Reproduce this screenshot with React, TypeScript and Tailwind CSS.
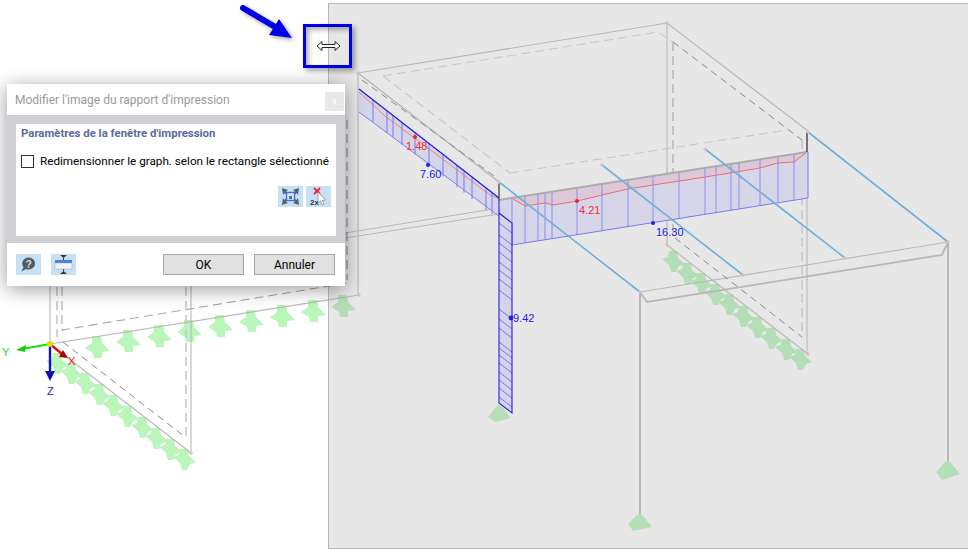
const GREEN_WHITE = "#baf5ba";
const GREEN_PANEL = "#b4dfb6";
const spade = "-5,-12 4,-12 5,-5 13,3 5,4 5,10 -3,10 -4,5 -12,0 -5,-5";
const spadeSide = "-4,-11 4,-11 5,-4 12,2 6,4 3,10 -2,10 -4,3 -11,-3 -5,-5";

const row1 = [[97, 348], [128, 342], [159, 337], [189, 332], [220, 327], [251, 322], [282, 317], [313, 312], [343, 307]];
const row2 = [[57, 364], [71, 374], [85, 384], [99, 395], [113, 406], [127, 417], [142, 428], [156, 439], [170, 450], [184, 460]];
const row3 = [[673, 262], [687, 274], [701, 284], [715, 295], [729, 305], [743, 317], [757, 328], [771, 339], [786, 350], [800, 360]];

const beamHatch = [512, 525, 538, 545, 552, 577, 602, 628, 653, 679, 705, 716, 731, 739, 760, 778, 794];
const columnHatch = [223, 235, 243, 252, 262, 270, 279, 290, 309, 319, 328, 342, 348, 355, 363, 372, 380, 388, 397];
const sideHatch = [373, 387, 393, 402, 415, 429, 443, 457, 464, 472, 486, 492];

const nodes = [[358, 73], [667, 23], [808, 132], [499, 182], [667, 245], [808, 354], [359, 295], [191, 453], [640, 292], [948, 242], [743, 275], [845, 258], [602, 165], [705, 149]];

function Model() {
  return (
    <svg className="absolute left-0 top-0" width="968" height="550" viewBox="0 0 968 550" fill="none">
      {/* supports */}
      {row1.map(([x, y]) => (
        <polygon key={`${x}-${y}`} points={spade} transform={`translate(${x} ${y})`} fill={x > 328 ? GREEN_PANEL : GREEN_WHITE} />
      ))}
      {row2.map(([x, y]) => (
        <polygon key={`${x}-${y}`} points={spadeSide} transform={`translate(${x} ${y})`} fill={GREEN_WHITE} />
      ))}
      {row3.map(([x, y]) => (
        <polygon key={`${x}-${y}`} points={spadeSide} transform={`translate(${x} ${y})`} fill={GREEN_PANEL} />
      ))}
      <polygon points="488,417 495,408 499,404 503,408 511,418 495,422" fill={GREEN_PANEL} />
      <polygon points="628,524 636,516 640,513 644,517 652,527 633,531" fill={GREEN_PANEL} />
      <polygon points="936,472 944,463 948,460 952,464 960,474 942,480" fill={GREEN_PANEL} />

      {/* frame lines */}
      <g stroke="#b8b8b8" strokeWidth="1.1">
        <path d="M358 73 L667 23 L808 131" />
        <path d="M358 73 L499 182" strokeWidth="1.5" />
        <path d="M358 73 V295" />
        <path d="M50 344 L359 295" />
        <path d="M50 344 L191 453" />
        <path d="M50 286 V344" />
        <path d="M191 286 V453" />
        <path d="M667 23 V245" />
        <path d="M667 245 L808 354" />
        <path d="M807 132 V354" />
        <path d="M345 238 L499 214" />
        <path d="M345 233 L499 208" />
        <path d="M640 292 L948 242" />
        <path d="M640 292 L647 302 L942 255 L948 242" strokeWidth="1.8" />
        <path d="M640 292 V514" strokeWidth="2" />
        <path d="M948 242 V461" strokeWidth="2" />
      </g>
      <g stroke="#c8c8c8" strokeWidth="1.1" strokeDasharray="9 5">
        <path d="M383 76 L658 32 L673 42" />
        <path d="M510 173 L787 130" />
        <path d="M383 76 L510 173" />
        <path d="M62 287 V330 L347 283" stroke="#a8a8a8" />
        <path d="M802 140 V333" strokeWidth="1.6" />
        <path d="M673 42 V238" strokeWidth="1.4" stroke="#b4b4b4" />
        <path d="M186 287 V437" strokeWidth="1.6" />
        <path d="M57 287 V337" strokeWidth="1.6" />
        <path d="M347 120 V280" stroke="#8a8a8a" />
      </g>
      <g stroke="#8a8a8a" strokeWidth="1" strokeDasharray="7 5">
        <path d="M362 80 L497 178" />
        <path d="M673 42 L802 140" />
        <path d="M675 238 L802 337" />
        <path d="M63 342 L185 437" />
      </g>

      {/* side beam diagram */}
      <polygon points="359,89 499,198 499,216 359,112" fill="#d5d5e8" />
      <path d="M359 92 L385 116 L440 157 L490 195 L499 199" stroke="#f08080" strokeWidth="1" />
      {sideHatch.map((x) => {
        const top = 89 + ((x - 359) * 109) / 140;
        return <path key={x} d={`M${x} ${top} V${top + 22}`} stroke="#7878f0" strokeWidth="1" />;
      })}
      <path d="M359 89 L499 198" stroke="#2020e0" strokeWidth="1.3" />
      <path d="M359 112 L499 216" stroke="#8080f0" strokeWidth="1" />

      {/* main beam diagram */}
      <polygon points="499,200 807,152 808,198 512,245 512,223 499,213" fill="#d6d6e8" />
      <polygon points="513,199 525,206 545,203 553,205 577,201 602,195 628,189 653,185 680,181 705,177 730,173 760,168 778,163 794,162 807,152 499,200" fill="#dcc8d6" />
      <path d="M513 199 L525 206 L545 203 L553 205 L577 201 L602 195 L628 189 L653 185 L680 181 L705 177 L730 173 L760 168 L778 163 L794 162 L807 152" stroke="#f06a6a" strokeWidth="1" />
      {beamHatch.map((x) => (
        <path key={x} d={`M${x} ${200 - ((x - 499) * 48) / 308} V${245 - ((x - 512) * 47) / 296}`} stroke="#8c8cf0" strokeWidth="1" />
      ))}
      <path d="M512 245 L808 198 V152" stroke="#7a7af0" strokeWidth="1" />
      <path d="M499 200 L807 152" stroke="#acacac" strokeWidth="2" />
      <path d="M499 182 V200 M807 132 V152" stroke="#3a3a3a" strokeWidth="1.2" />

      {/* column diagram */}
      <polygon points="499,200 512,223 512,413 499,403" fill="#d4d4e8" />
      {columnHatch.map((y) => (
        <path key={y} d={`M499 ${y} L512 ${y + 10}`} stroke="#6060ee" strokeWidth="0.8" />
      ))}
      <path d="M499 200 V403 L512 413 V223 L499 213" stroke="#2020e8" strokeWidth="1.1" />

      {/* purlins */}
      <g stroke="#6fb1d9" strokeWidth="1.6">
        <path d="M499 182 L640 292" />
        <path d="M602 165 L743 275" />
        <path d="M705 149 L845 258" />
        <path d="M808 132 L948 242" />
      </g>

      {nodes.map(([x, y]) => (
        <circle key={`${x}-${y}`} cx={x} cy={y} r="1.7" fill="#e6b9bf" />
      ))}

      {/* extreme values */}
      <g fontFamily="'Liberation Sans', sans-serif" fontSize="11">
        <circle cx="415" cy="137" r="2" fill="#f02020" />
        <text x="406" y="150" fill="#f03030">1.48</text>
        <circle cx="428" cy="165" r="2" fill="#2020e0" />
        <text x="420" y="178" fill="#2020e8">7.60</text>
        <circle cx="577" cy="201" r="2" fill="#f02020" />
        <text x="579" y="214" fill="#f03030">4.21</text>
        <circle cx="653" cy="223" r="2" fill="#2020e0" />
        <text x="656" y="236" fill="#2020e8">16.30</text>
        <circle cx="511" cy="318" r="2.4" fill="#2020e0" />
        <text x="513" y="322" fill="#2020e8">9.42</text>
      </g>

      {/* axes */}
      <path d="M50 344 L22 349" stroke="#14e014" strokeWidth="2" />
      <polygon points="16,350 26,345 25,352" fill="#14d014" />
      <path d="M50 344 L62 354" stroke="#e01010" strokeWidth="2.4" />
      <polygon points="68,358 59,357 63,350" fill="#b00000" />
      <path d="M50 344 V372" stroke="#1010d0" strokeWidth="2.4" />
      <polygon points="50,381 45,371 55,371" fill="#1010b0" />
      <circle cx="50" cy="344" r="3" fill="#e6d800" />
      <g fontFamily="'Liberation Sans', sans-serif" fontSize="11">
        <text x="2" y="356" fill="#14e014">Y</text>
        <text x="68" y="365" fill="#f02020">X</text>
        <text x="47" y="395" fill="#2020e8">Z</text>
      </g>

      {/* callout arrow */}
      <g className="drop-shadow-[2px_2px_2px_rgba(0,0,0,0.35)]">
        <path d="M243 8 L277 28" stroke="#0000e6" strokeWidth="6" strokeLinecap="round" />
        <polygon points="292,38 269,35 279,19" fill="#0000e6" />
      </g>

      {/* resize cursor */}
      <path d="M317 46 L322 41.5 V44.5 H335 V41.5 L340 46 L335 50.5 V47.5 H322 V50.5 Z" fill="#fff" stroke="#222" strokeWidth="1" />
    </svg>
  );
}

function ButtonIcon({ children }: { children: React.ReactNode }) {
  return <div className="flex h-[21px] w-[25px] items-center justify-center bg-[#c6e1f6]">{children}</div>;
}

function Dialog() {
  return (
    <div className="absolute left-[7px] top-[84px] flex h-[202px] w-[338px] flex-col bg-white font-['Roboto','Noto_Sans',sans-serif] shadow-[0_3px_18px_rgba(0,0,0,0.4)]">
      <div className="flex h-[31px] items-start justify-between pl-2 pr-px">
        <span className="mt-[8px] text-[12px] leading-4 text-[#9a9a9a]">Modifier l'image du rapport d'impression</span>
        <div className="mt-2 flex h-[19px] w-[19px] items-center justify-center bg-[#e8e8e8] text-[10px] leading-none text-white">x</div>
      </div>
      <div className="h-[128px] bg-[#cfcfd4] p-[9px]">
        <div className="flex h-[112px] flex-col bg-white pl-[5px] pr-[5px]">
          <div className="mt-[1px] text-[11.4px] font-bold leading-4 text-[#5a6b9b]">Paramètres de la fenêtre d'impression</div>
          <div className="mt-[12px] flex items-center gap-[6px]">
            <div className="h-[13px] w-[13px] shrink-0 border border-[#333]" />
            <span className="whitespace-nowrap text-[11.7px] leading-4 text-black">Redimensionner le graph. selon le rectangle sélectionné</span>
          </div>
          <div className="mt-[17px] flex justify-end gap-[3px]">
            <ButtonIcon>
              <svg width="21" height="19" viewBox="0 0 21 19">
                <path d="M2 1 L8 3 L6 4.5 L8 6.5 L6.5 8 L4.5 6 L3 8 Z M19 1 L13 3 L15 4.5 L13 6.5 L14.5 8 L16.5 6 L18 8 Z M2 18 L8 16 L6 14.5 L8 12.5 L6.5 11 L4.5 13 L3 11 Z M19 18 L13 16 L15 14.5 L13 12.5 L14.5 11 L16.5 13 L18 11 Z" fill="#5a5f66" />
                <rect x="6.5" y="5.5" width="8" height="8" fill="#dbe7f8" stroke="#3c6fd8" strokeWidth="1.4" />
                <rect x="9" y="9" width="3" height="3" fill="#3c6fd8" />
              </svg>
            </ButtonIcon>
            <ButtonIcon>
              <svg width="25" height="21" viewBox="0 0 25 21">
                <path d="M8 2 L14 8 M14 2 L8 8" stroke="#ee2030" strokeWidth="1.8" />
                <text x="4" y="19" fontSize="8" fontWeight="700" fill="#333" fontFamily="'Liberation Sans', sans-serif">2x</text>
                <path d="M12 6 L12 17 L14.5 15 L16 19 L18 18 L16.5 14.5 L19.5 14 Z" fill="#fff" stroke="#8a8a8a" strokeWidth="0.8" />
              </svg>
            </ButtonIcon>
          </div>
        </div>
      </div>
      <div className="flex flex-1 items-center pl-[9px] pr-[10px]">
        <div className="flex gap-[10px]">
          <ButtonIcon>
            <svg width="17" height="17" viewBox="0 0 17 17">
              <path d="M8.5 1.5 A6.5 6 0 1 1 6 13 L1.5 15.5 L3.5 11 A6.5 6 0 0 1 8.5 1.5 Z" fill="#55595e" />
              <text x="8.7" y="11.5" textAnchor="middle" fontSize="10" fontWeight="700" fill="#c6e1f6" fontFamily="'Liberation Sans', sans-serif">?</text>
            </svg>
          </ButtonIcon>
          <ButtonIcon>
            <svg width="25" height="21" viewBox="0 0 25 21">
              <path d="M9 1 H16 L12.5 4 Z M9 20 H16 L12.5 17 Z" fill="#3a3a3a" />
              <path d="M12 4 H13 V6 H12 Z M12 15 H13 V17 H12 Z" fill="#3a3a3a" />
              <rect x="4" y="6" width="17" height="3" fill="#4a7fe0" />
              <rect x="4" y="9" width="17" height="6" fill="#f2f6fc" stroke="#8fa6c8" strokeWidth="0.5" />
            </svg>
          </ButtonIcon>
        </div>
        <div className="ml-auto flex gap-[10px]">
          <button className="h-[21px] w-[81px] border border-[#a6a6a6] bg-[#e1e1e1] text-[12px] leading-none text-black">OK</button>
          <button className="h-[21px] w-[81px] border border-[#a6a6a6] bg-[#e1e1e1] text-[12px] leading-none text-black">Annuler</button>
        </div>
      </div>
    </div>
  );
}

export default function App() {
  return (
    <div className="relative h-[550px] w-[968px] overflow-hidden bg-white">
      {/* 3D view panel */}
      <div className="ml-[328px] mt-[3px] h-[546px] w-[640px] border-b border-l border-t border-[#b8b8b8] bg-[#e7e7e7]" />
      <Model />
      {/* callout box */}
      <div className="absolute left-[303px] top-[24px] h-[44px] w-[49px] border-[3px] border-[#0000e6] shadow-[3px_3px_5px_rgba(0,0,0,0.35),inset_3px_3px_5px_rgba(0,0,0,0.3)]" />
      <Dialog />
    </div>
  );
}
